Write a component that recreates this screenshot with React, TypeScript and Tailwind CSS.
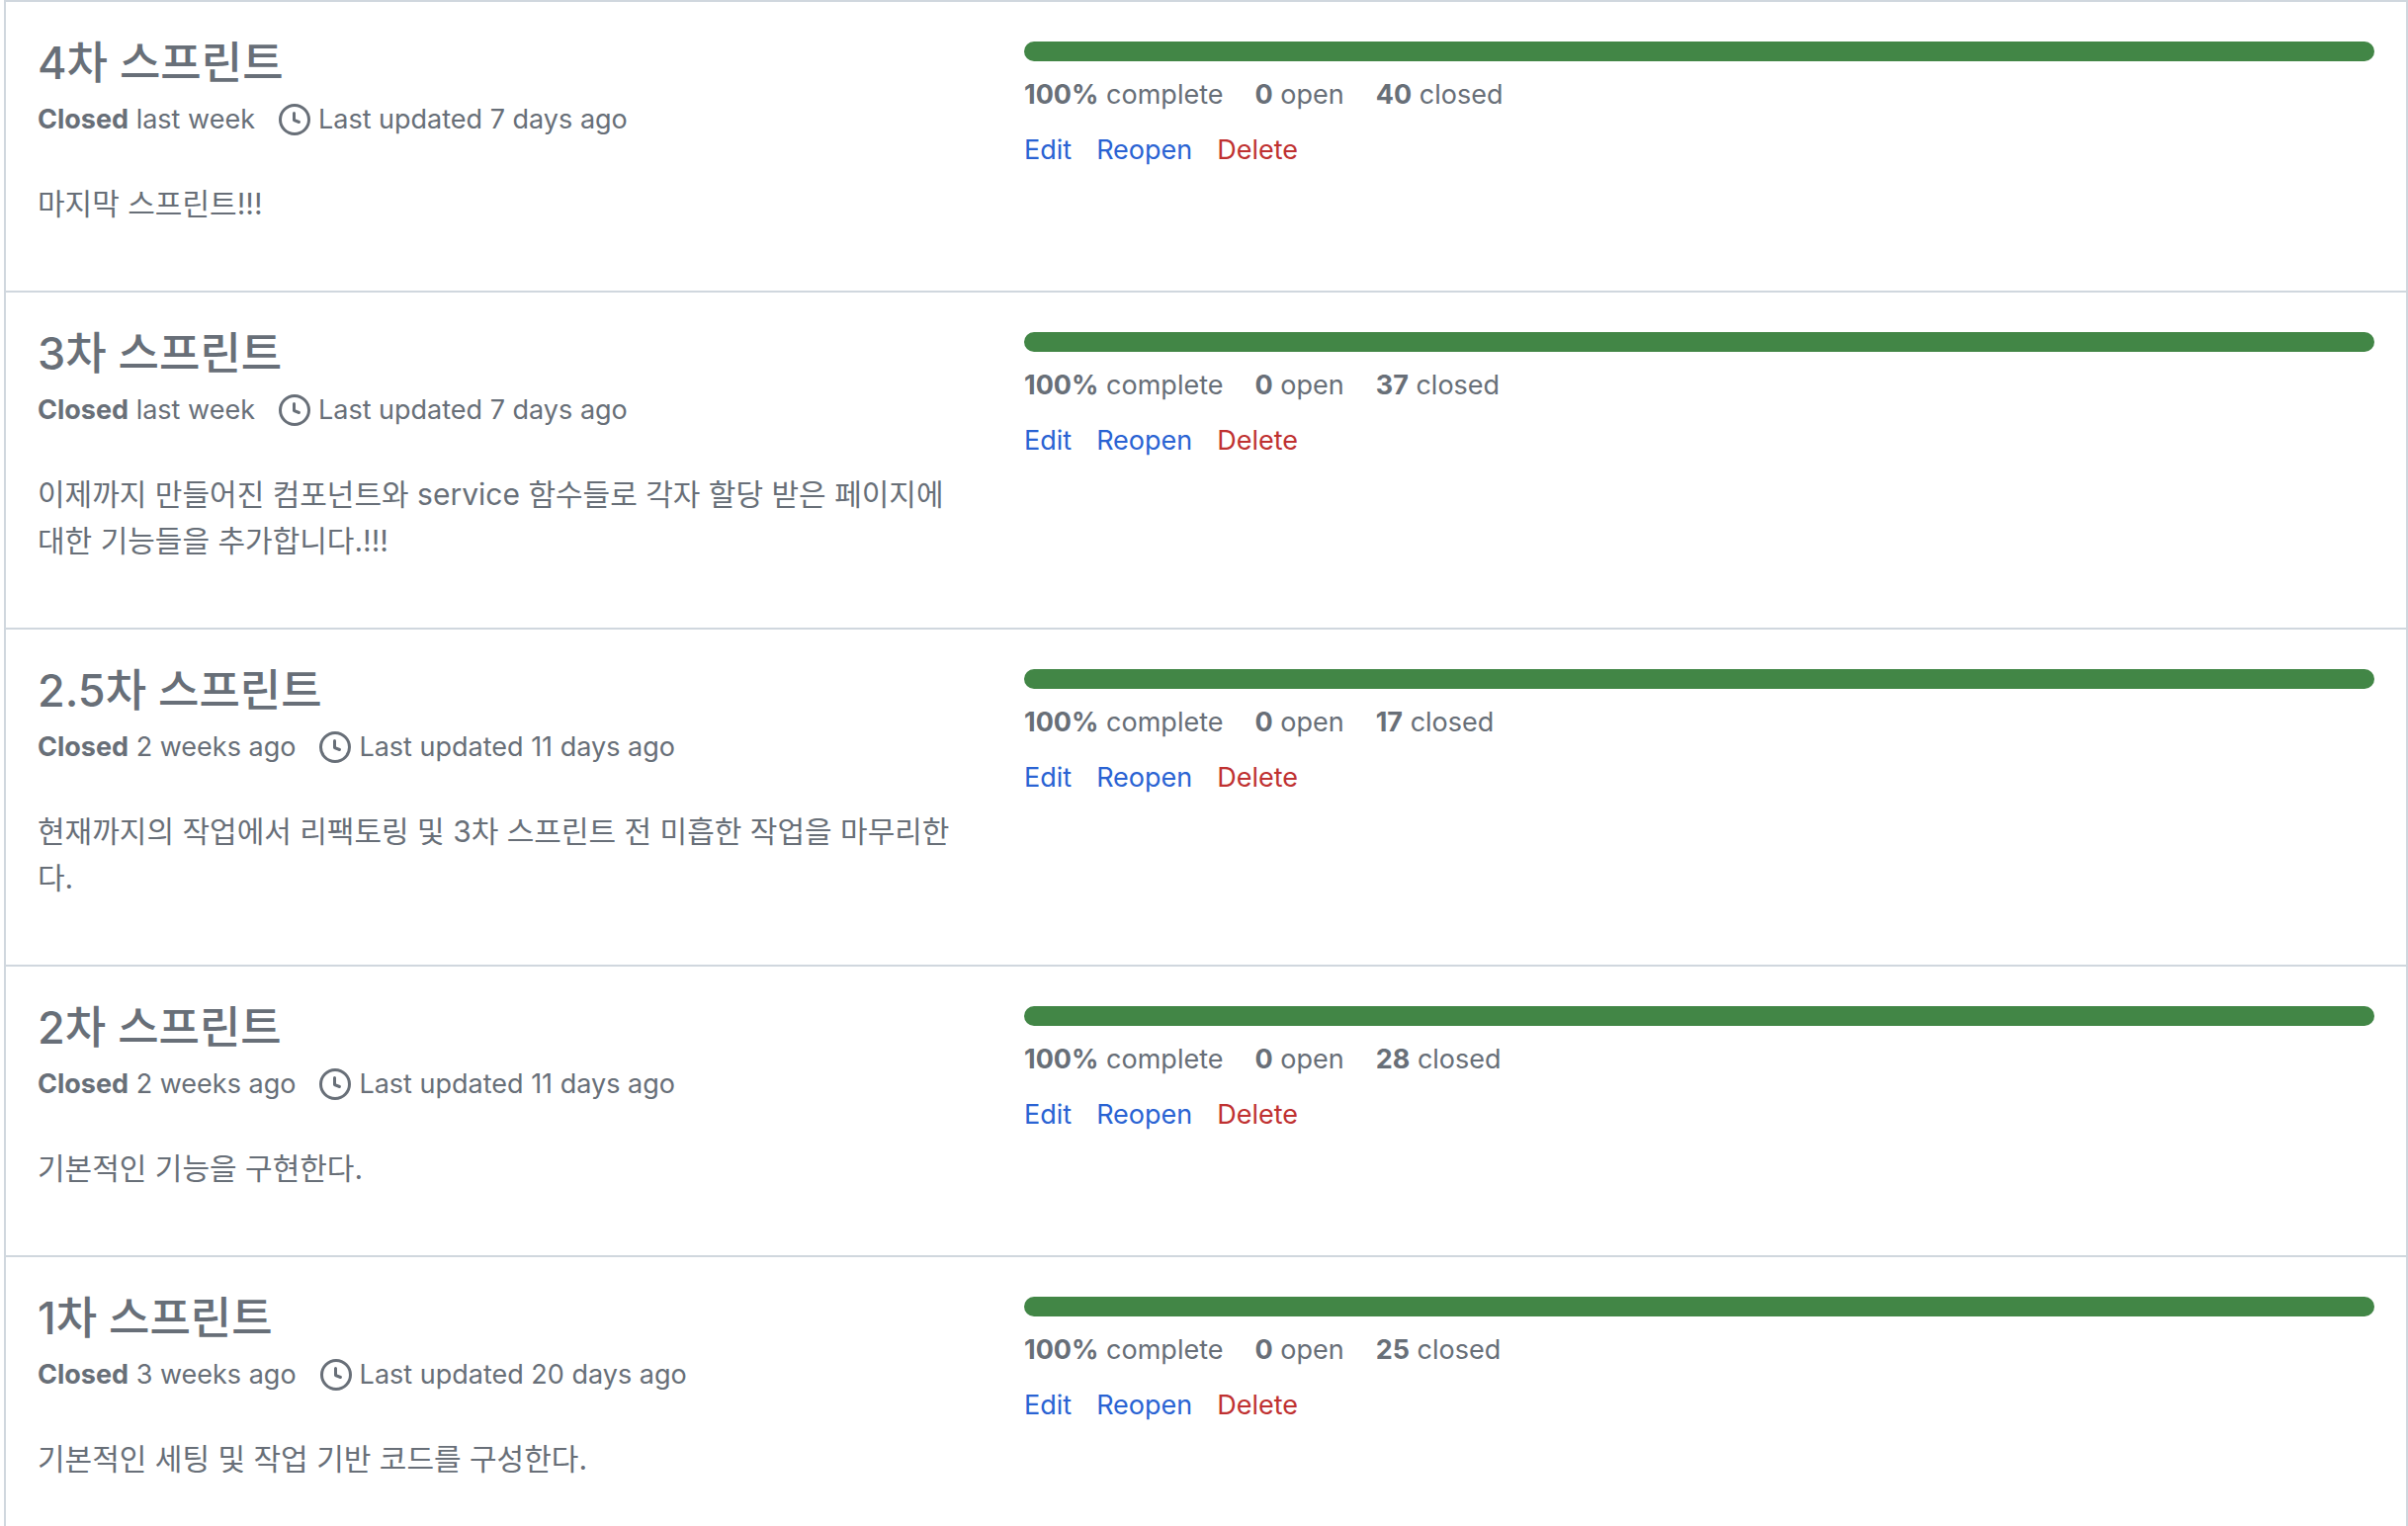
type Milestone = {
  title: string;
  closed: string;
  updated: string;
  description: string;
  closedCount: number;
};

const milestones: Milestone[] = [
  { title: "4차 스프린트", closed: "last week", updated: "7 days ago", description: "마지막 스프린트!!!", closedCount: 40 },
  {
    title: "3차 스프린트",
    closed: "last week",
    updated: "7 days ago",
    description: "이제까지 만들어진 컴포넌트와 service 함수들로 각자 할당 받은 페이지에 대한 기능들을 추가합니다.!!!",
    closedCount: 37,
  },
  {
    title: "2.5차 스프린트",
    closed: "2 weeks ago",
    updated: "11 days ago",
    description: "현재까지의 작업에서 리팩토링 및 3차 스프린트 전 미흡한 작업을 마무리한다.",
    closedCount: 17,
  },
  { title: "2차 스프린트", closed: "2 weeks ago", updated: "11 days ago", description: "기본적인 기능을 구현한다.", closedCount: 28 },
  { title: "1차 스프린트", closed: "3 weeks ago", updated: "20 days ago", description: "기본적인 세팅 및 작업 기반 코드를 구성한다.", closedCount: 25 },
];

function ClockIcon() {
  return (
    <svg viewBox="0 0 16 16" className="size-8 shrink-0 fill-current" aria-hidden="true">
      <path
        fillRule="evenodd"
        d="M1.5 8a6.5 6.5 0 1113 0 6.5 6.5 0 01-13 0zM8 0a8 8 0 100 16A8 8 0 008 0zm.5 4.75a.75.75 0 00-1.5 0v3.5a.75.75 0 00.471.696l2.5 1a.75.75 0 00.557-1.392L8.5 7.742V4.75z"
      />
    </svg>
  );
}

function MilestoneRow({ title, closed, updated, description, closedCount }: Milestone) {
  return (
    <li className="flex border-t-2 border-[#d0d7de] px-8 pt-10 pb-16">
      <div className="w-[998px] shrink-0 pr-16">
        <h2 className="text-[45px] leading-[43px] font-medium">
          <a href="#milestone">{title}</a>
        </h2>
        <div className="mt-3.5 flex h-11 items-center text-[27px] leading-[44px]">
          <span>
            <b className="font-bold">Closed</b> {closed}
          </span>
          <span className="ml-6 flex items-center gap-2">
            <ClockIcon />
            Last updated {updated}
          </span>
        </div>
        <p className="mt-10 text-[30px] leading-[47px]">{description}</p>
      </div>
      <div className="min-w-0 flex-1">
        <div role="progressbar" aria-label={title} aria-valuenow={100} className="h-5 rounded-[10px] bg-[#428646]" />
        <div className="mt-3 flex gap-8 text-[27px] leading-[44px]">
          <span>
            <b className="font-bold">100%</b> complete
          </span>
          <span>
            <b className="font-bold">0</b> open
          </span>
          <span>
            <b className="font-bold">{closedCount}</b> closed
          </span>
        </div>
        <div className="mt-3 flex gap-[25px] text-[27px] leading-[44px]">
          <button type="button" className="text-[#2a63d3]">Edit</button>
          <button type="button" className="text-[#2a63d3]">Reopen</button>
          <button type="button" className="text-[#bf3131]">Delete</button>
        </div>
      </div>
    </li>
  );
}

export default function App() {
  return (
    <main className="h-screen overflow-hidden bg-white pl-1 font-['Inter','Noto_Sans_CJK_KR',sans-serif] text-[#686f78]">
      <ul className="border-x-2 border-[#d0d7de]">
        {milestones.map((m) => (
          <MilestoneRow key={m.title} {...m} />
        ))}
      </ul>
    </main>
  );
}
